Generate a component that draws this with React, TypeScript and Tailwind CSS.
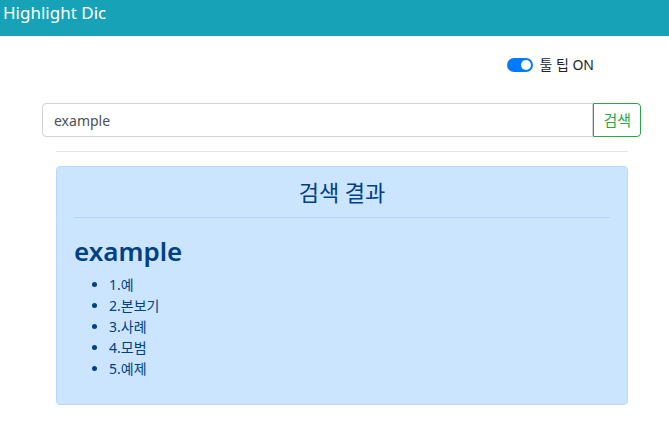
import React from 'react';

const meanings = ['예', '본보기', '사례', '모범', '예제'];

export default function App() {
  return (
    <div
      className="min-h-[434px] w-full bg-white text-[#212529]"
      style={{ fontFamily: '"Noto Sans", "Noto Sans CJK KR", sans-serif' }}
    >
      {/* Header */}
      <div className="flex h-[36px] items-start bg-[#17a2b8] pl-[3px] pt-[1px]">
        <span className="text-[17px] leading-[24px] text-white">Highlight Dic</span>
      </div>

      {/* Tooltip toggle */}
      <div className="flex justify-end pr-[75px] pt-[19px]">
        <label className="flex items-center gap-[6px]">
          <span className="relative inline-block h-[14px] w-[26px] rounded-full bg-[#007bff]">
            <span className="absolute right-[2px] top-[2px] h-[10px] w-[10px] rounded-full bg-white" />
          </span>
          <span className="text-[14px] leading-[20px]">툴 팁 ON</span>
        </label>
      </div>

      {/* Search */}
      <div className="flex pl-[42px] pr-[28px] pt-[28px]">
        <div className="flex h-[34px] flex-1 items-center rounded-l-[4px] border border-[#ced4da] px-[11px] text-[14px] text-[#495057]">
          example
        </div>
        <button className="h-[34px] rounded-r-[4px] border border-[#28a745] px-[9px] text-[15px] text-[#28a745]">
          검색
        </button>
      </div>

      <div className="px-[56px] pt-[14px] pr-[41px]">
        <hr className="border-t border-[#e5e5e5]" />

        {/* Results */}
        <div className="mt-[14px] rounded-[4px] border border-[#b8daff] bg-[#cce5ff] px-[17px] pb-[25px] pt-[10px] text-[#004085]">
          <h4 className="text-center text-[22px] leading-[30px]">검색 결과</h4>
          <hr className="mt-[10px] border-t border-[#9fcdff] opacity-70" />
          <h2 className="mt-[16px] text-[26px] font-semibold leading-[34px]">example</h2>
          <ul className="mt-[6px] list-disc pl-[35px] text-[14px] leading-[21px]">
            {meanings.map((m, i) => (
              <li key={m}>
                {i + 1}.{m}
              </li>
            ))}
          </ul>
        </div>
      </div>
    </div>
  );
}
